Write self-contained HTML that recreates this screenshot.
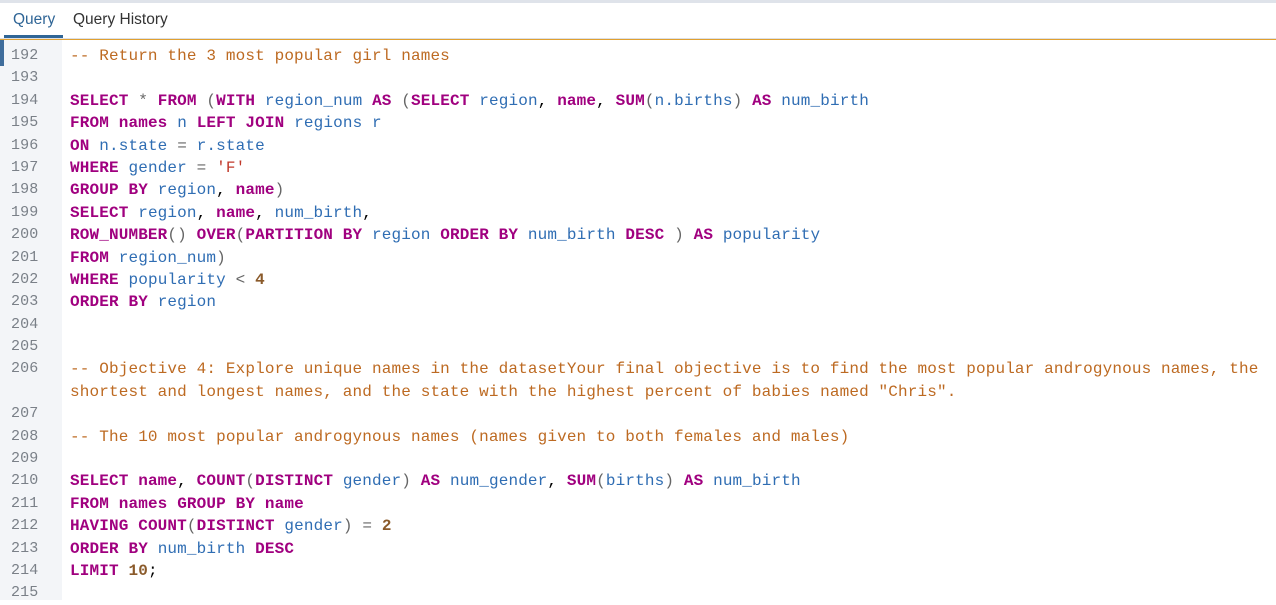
<!DOCTYPE html>
<html><head><style>
body{margin:0;width:1276px;height:595px;overflow:hidden;background:#fff;font-family:"Liberation Sans",sans-serif}
.top{position:absolute;left:0;top:0;width:1276px;height:3px;background:#dfe3ea}
.tabs{position:absolute;top:3px;left:0;height:35px;width:1276px}
.tab{position:absolute;top:8px;font-size:15.5px;color:#333}
.t1{left:13px;color:#2f6596}
.t2{left:73px}
.ul{position:absolute;left:4px;top:35px;width:59px;height:3px;background:#2f6596}
.l1{position:absolute;top:38px;left:0;width:1276px;height:1px;background:#dcdfe4}
.l2{position:absolute;top:39px;left:0;width:1276px;height:1px;background:#e0a030}
.gut{position:absolute;top:40px;left:0;width:62px;height:560px;background:#f3f5f8}
.bar{position:absolute;top:40px;left:0;width:4px;height:26px;background:#3f6d9c}
.code{position:absolute;top:45px;left:0;font-family:"Liberation Mono",monospace;font-size:16px;letter-spacing:0.14px;line-height:22.4px;white-space:normal}
.r{position:relative;height:22.4px}
.n{position:absolute;left:11px;color:#7a8088;font-size:15px}
.c{position:absolute;left:70px;white-space:pre}
.k{color:#a0007f;font-weight:bold}
.i{color:#2f6db3}
.m{color:#bd6a22}
.s{color:#c0392b}
.d{color:#8a5a2a;font-weight:bold}
.o{color:#666}
</style></head><body>
<div class="top"></div>
<div class="tabs"><span class="tab t1">Query</span><span class="tab t2">Query History</span></div>
<div class="ul"></div><div class="l1"></div><div class="l2"></div>
<div class="gut"></div><div class="bar"></div>
<div class="code"><div class="r"><span class="n">192</span><span class="c m">-- Return the 3 most popular girl names</span></div><div class="r"><span class="n">193</span></div><div class="r"><span class="n">194</span><span class="c"><span class="k">SELECT</span> <span class="o">*</span> <span class="k">FROM</span> <span class="o">(</span><span class="k">WITH</span> <span class="i">region_num</span> <span class="k">AS</span> <span class="o">(</span><span class="k">SELECT</span> <span class="i">region</span>, <span class="k">name</span>, <span class="k">SUM</span><span class="o">(</span><span class="i">n.births</span><span class="o">)</span> <span class="k">AS</span> <span class="i">num_birth</span></span></div><div class="r"><span class="n">195</span><span class="c"><span class="k">FROM</span> <span class="k">names</span> <span class="i">n</span> <span class="k">LEFT JOIN</span> <span class="i">regions r</span></span></div><div class="r"><span class="n">196</span><span class="c"><span class="k">ON</span> <span class="i">n.state</span> <span class="o">=</span> <span class="i">r.state</span></span></div><div class="r"><span class="n">197</span><span class="c"><span class="k">WHERE</span> <span class="i">gender</span> <span class="o">=</span> <span class="s">'F'</span></span></div><div class="r"><span class="n">198</span><span class="c"><span class="k">GROUP BY</span> <span class="i">region</span>, <span class="k">name</span><span class="o">)</span></span></div><div class="r"><span class="n">199</span><span class="c"><span class="k">SELECT</span> <span class="i">region</span>, <span class="k">name</span>, <span class="i">num_birth</span>,</span></div><div class="r"><span class="n">200</span><span class="c"><span class="k">ROW_NUMBER</span><span class="o">()</span> <span class="k">OVER</span><span class="o">(</span><span class="k">PARTITION BY</span> <span class="i">region</span> <span class="k">ORDER BY</span> <span class="i">num_birth</span> <span class="k">DESC</span> <span class="o">)</span> <span class="k">AS</span> <span class="i">popularity</span></span></div><div class="r"><span class="n">201</span><span class="c"><span class="k">FROM</span> <span class="i">region_num</span><span class="o">)</span></span></div><div class="r"><span class="n">202</span><span class="c"><span class="k">WHERE</span> <span class="i">popularity</span> <span class="o">&lt;</span> <span class="d">4</span></span></div><div class="r"><span class="n">203</span><span class="c"><span class="k">ORDER BY</span> <span class="i">region</span></span></div><div class="r"><span class="n">204</span></div><div class="r"><span class="n">205</span></div><div class="r"><span class="n">206</span><span class="c m">-- Objective 4: Explore unique names in the datasetYour final objective is to find the most popular androgynous names, the</span></div><div class="r"><span class="c m">shortest and longest names, and the state with the highest percent of babies named "Chris".</span></div><div class="r"><span class="n">207</span></div><div class="r"><span class="n">208</span><span class="c m">-- The 10 most popular androgynous names (names given to both females and males)</span></div><div class="r"><span class="n">209</span></div><div class="r"><span class="n">210</span><span class="c"><span class="k">SELECT</span> <span class="k">name</span>, <span class="k">COUNT</span><span class="o">(</span><span class="k">DISTINCT</span> <span class="i">gender</span><span class="o">)</span> <span class="k">AS</span> <span class="i">num_gender</span>, <span class="k">SUM</span><span class="o">(</span><span class="i">births</span><span class="o">)</span> <span class="k">AS</span> <span class="i">num_birth</span></span></div><div class="r"><span class="n">211</span><span class="c"><span class="k">FROM</span> <span class="k">names</span> <span class="k">GROUP BY</span> <span class="k">name</span></span></div><div class="r"><span class="n">212</span><span class="c"><span class="k">HAVING</span> <span class="k">COUNT</span><span class="o">(</span><span class="k">DISTINCT</span> <span class="i">gender</span><span class="o">)</span> <span class="o">=</span> <span class="d">2</span></span></div><div class="r"><span class="n">213</span><span class="c"><span class="k">ORDER BY</span> <span class="i">num_birth</span> <span class="k">DESC</span></span></div><div class="r"><span class="n">214</span><span class="c"><span class="k">LIMIT</span> <span class="d">10</span>;</span></div><div class="r"><span class="n">215</span></div></div>
</body></html>
